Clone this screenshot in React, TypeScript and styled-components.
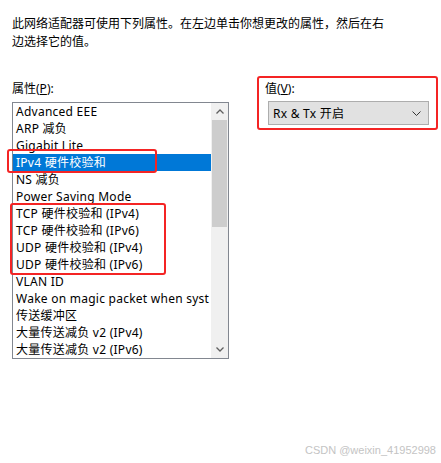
import React from 'react';
import styled, {createGlobalStyle} from 'styled-components';

const GlobalStyle = createGlobalStyle`
  body {
    margin: 0;
    background: #fff;
    font-family: "Noto Sans", "Noto Sans CJK SC", sans-serif;
    font-size: 12px;
    color: #000;
  }
`

const Page = styled.div`
  position: relative;
  width: 441px;
  height: 463px;
  padding: 15px 0 0 12px;
  box-sizing: border-box;
  overflow: hidden;
`

const Intro = styled.p`
  margin: 0;
  width: 380px;
  line-height: 18px;
`

const Columns = styled.div`
  display: flex;
  margin-top: 31px;
`

const Left = styled.div`
  display: flex;
  flex-direction: column;
  width: 217px;
`

const Right = styled.div`
  position: relative;
  display: flex;
  flex-direction: column;
  margin-left: 36px;
  width: 164px;
`

const Label = styled.div`
  height: 14px;
  line-height: 14px;
  u { text-decoration: underline; text-underline-offset: 1px; }
`

const ListBox = styled.div`
  position: relative;
  display: flex;
  margin-top: 6px;
  height: 257px;
  border: 1px solid #828790;
  box-sizing: border-box;
`

const Items = styled.div`
  flex: 1;
  overflow: hidden;
`

const Item = styled.div<{selected?: boolean}>`
  height: 17px;
  line-height: 17px;
  padding-left: 3px;
  letter-spacing: 0.25px;
  white-space: nowrap;
  overflow: hidden;
  background: ${p => (p.selected ? '#0078d7' : 'transparent')};
  color: ${p => (p.selected ? '#fff' : '#000')};
`

const ScrollBar = styled.div`
  width: 17px;
  background: #f0f0f0;
  display: flex;
  flex-direction: column;
`

const Arrow = styled.div`
  height: 17px;
  display: flex;
  align-items: center;
  justify-content: center;
`

const Track = styled.div`
  flex: 1;
  padding: 0 1px;
`

const Thumb = styled.div`
  height: 107px;
  background: #cdcdcd;
`

const Select = styled.div`
  display: flex;
  align-items: center;
  justify-content: space-between;
  margin: 5px 0 0 3px;
  width: 161px;
  height: 24px;
  box-sizing: border-box;
  border: 1px solid #adadad;
  background: #e1e1e1;
  padding: 0 7px 0 4px;
  letter-spacing: 0.25px;
`

const Mark = styled.div<{x: number; y: number; w: number; h: number}>`
  position: absolute;
  left: ${p => p.x}px;
  top: ${p => p.y}px;
  width: ${p => p.w}px;
  height: ${p => p.h}px;
  border: 2px solid #f42424;
  border-radius: 3px;
  box-sizing: border-box;
  pointer-events: none;
`

const Watermark = styled.div`
  position: absolute;
  right: 5px;
  bottom: 7px;
  font-family: "Liberation Sans", Arial, sans-serif;
  font-size: 11px;
  color: #c4c4c4;
`

const items = [
  'Advanced EEE',
  'ARP 减负',
  'Gigabit Lite',
  'IPv4 硬件校验和',
  'NS 减负',
  'Power Saving Mode',
  'TCP 硬件校验和 (IPv4)',
  'TCP 硬件校验和 (IPv6)',
  'UDP 硬件校验和 (IPv4)',
  'UDP 硬件校验和 (IPv6)',
  'VLAN ID',
  'Wake on magic packet when syst',
  '传送缓冲区',
  '大量传送减负 v2 (IPv4)',
  '大量传送减负 v2 (IPv6)',
];

const Chevron = ({up}: {up?: boolean}) => (
  <svg width="8" height="5" viewBox="0 0 8 5">
    <path d={up ? 'M0.5 4.5 L4 1 L7.5 4.5' : 'M0.5 0.5 L4 4 L7.5 0.5'} fill="none" stroke="#606060" strokeWidth="1.3"/>
  </svg>
);

export default function App() {
  return (
    <Page>
      <GlobalStyle/>
      <Intro>此网络适配器可使用下列属性。在左边单击你想更改的属性，然后在右边选择它的值。</Intro>
      <Columns>
        <Left>
          <Label>属性(<u>P</u>):</Label>
          <ListBox>
            <Items>
              {items.map((t, i) => (
                <Item key={t} selected={i === 3}>{t}</Item>
              ))}
            </Items>
            <ScrollBar>
              <Arrow><Chevron up/></Arrow>
              <Track><Thumb/></Track>
              <Arrow><Chevron/></Arrow>
            </ScrollBar>
            <Mark x={-6} y={46} w={150} h={24}/>
            <Mark x={-3} y={100} w={156} h={72}/>
          </ListBox>
        </Left>
        <Right>
          <Label>值(<u>V</u>):</Label>
          <Select>
            <span>Rx &amp; Tx 开启</span>
            <svg width="9" height="5" viewBox="0 0 9 5">
              <path d="M0.5 0.5 L4.5 4.5 L8.5 0.5" fill="none" stroke="#333" strokeWidth="1"/>
            </svg>
          </Select>
          <Mark x={-8} y={-6} w={181} h={54}/>
        </Right>
      </Columns>
      <Watermark>CSDN @weixin_41952998</Watermark>
    </Page>
  );
}
